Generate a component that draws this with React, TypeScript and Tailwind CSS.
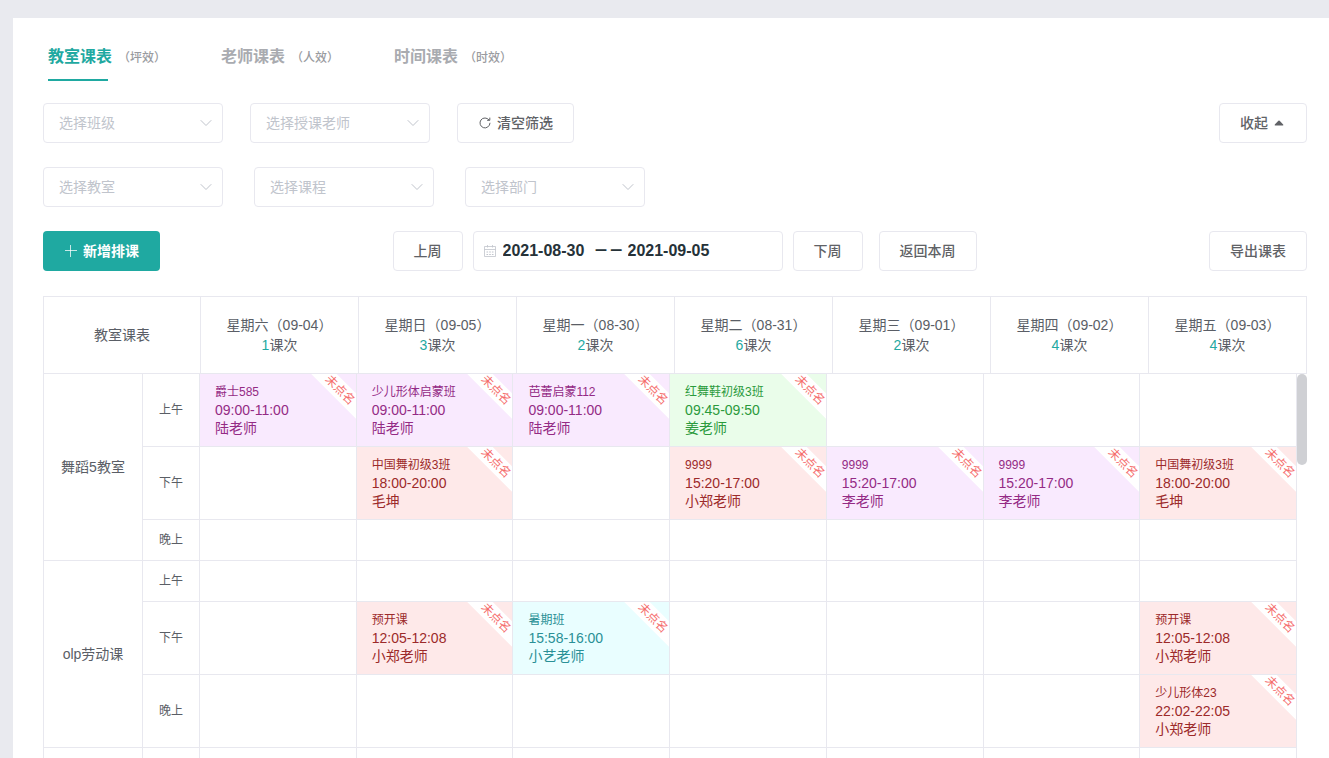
import React from 'react';
import clsx from 'clsx';

type Tone = 'purple' | 'red' | 'green' | 'cyan';

interface Lesson {
  title: string;
  time: string;
  teacher: string;
  tone: Tone;
}

interface Slot {
  period: string;
  lessons: Record<number, Lesson>;
}

interface Room {
  name: string;
  slots: Slot[];
}

const TONES: Record<Tone, string> = {
  purple: 'bg-[#f9eafe] text-[#942a85]',
  red: 'bg-[#fee9e9] text-[#9c2a2a]',
  green: 'bg-[#eafdea] text-[#2a9a3c]',
  cyan: 'bg-[#e9feff] text-[#2a9096]',
};

const TABS = [
  { label: '教室课表', hint: '（坪效）' },
  { label: '老师课表', hint: '（人效）' },
  { label: '时间课表', hint: '（时效）' },
];

const DAYS = [
  { name: '星期六（09-04）', count: 1 },
  { name: '星期日（09-05）', count: 3 },
  { name: '星期一（08-30）', count: 2 },
  { name: '星期二（08-31）', count: 6 },
  { name: '星期三（09-01）', count: 2 },
  { name: '星期四（09-02）', count: 4 },
  { name: '星期五（09-03）', count: 4 },
];

const ROOMS: Room[] = [
  {
    name: '舞蹈5教室',
    slots: [
      {
        period: '上午',
        lessons: {
          0: { title: '爵士585', time: '09:00-11:00', teacher: '陆老师', tone: 'purple' },
          1: { title: '少儿形体启蒙班', time: '09:00-11:00', teacher: '陆老师', tone: 'purple' },
          2: { title: '芭蕾启蒙112', time: '09:00-11:00', teacher: '陆老师', tone: 'purple' },
          3: { title: '红舞鞋初级3班', time: '09:45-09:50', teacher: '姜老师', tone: 'green' },
        },
      },
      {
        period: '下午',
        lessons: {
          1: { title: '中国舞初级3班', time: '18:00-20:00', teacher: '毛坤', tone: 'red' },
          3: { title: '9999', time: '15:20-17:00', teacher: '小郑老师', tone: 'red' },
          4: { title: '9999', time: '15:20-17:00', teacher: '李老师', tone: 'purple' },
          5: { title: '9999', time: '15:20-17:00', teacher: '李老师', tone: 'purple' },
          6: { title: '中国舞初级3班', time: '18:00-20:00', teacher: '毛坤', tone: 'red' },
        },
      },
      { period: '晚上', lessons: {} },
    ],
  },
  {
    name: 'olp劳动课',
    slots: [
      { period: '上午', lessons: {} },
      {
        period: '下午',
        lessons: {
          1: { title: '预开课', time: '12:05-12:08', teacher: '小郑老师', tone: 'red' },
          2: { title: '暑期班', time: '15:58-16:00', teacher: '小艺老师', tone: 'cyan' },
          6: { title: '预开课', time: '12:05-12:08', teacher: '小郑老师', tone: 'red' },
        },
      },
      {
        period: '晚上',
        lessons: {
          6: { title: '少儿形体23', time: '22:02-22:05', teacher: '小郑老师', tone: 'red' },
        },
      },
    ],
  },
  { name: '', slots: [{ period: '', lessons: {} }] },
];

const RefreshIcon = () => (
  <svg viewBox="0 0 14 14" className="h-3.5 w-3.5" fill="none" stroke="currentColor" strokeWidth="1" strokeLinecap="round" strokeLinejoin="round" aria-hidden="true">
    <path d="M12 7.2A5 5 0 1 1 11 3.9" />
    <path d="M11.8 2v2.3H9.5" />
  </svg>
);

const PlusIcon = () => (
  <svg viewBox="0 0 14 14" className="h-3.5 w-3.5" fill="none" stroke="currentColor" strokeWidth="1" aria-hidden="true">
    <path d="M1 6.5h12M6.5 1v12" strokeOpacity="0.75" />
  </svg>
);

const CaretTopIcon = () => (
  <svg viewBox="0 0 14 14" className="h-3.5 w-3.5" fill="currentColor" aria-hidden="true">
    <path d="M2.8 8.6 6.4 4.7q.6-.6 1.2 0l3.6 3.9q.5.9-.4.9H3.2q-.9 0-.4-.9Z" />
  </svg>
);

const ChevronDownIcon = () => (
  <svg viewBox="0 0 14 14" className="pointer-events-none absolute top-[13px] right-2.5 h-3.5 w-3.5 text-[#c0c4cc]" fill="none" stroke="currentColor" strokeWidth="1" strokeLinecap="round" strokeLinejoin="round" aria-hidden="true">
    <path d="M2 4.5l5 5 5-5" />
  </svg>
);

const CalendarIcon = () => (
  <svg viewBox="0 0 14 14" className="h-3.5 w-3.5 shrink-0 text-[#c0c4cc]" fill="none" stroke="currentColor" strokeWidth="1" aria-hidden="true">
    <path d="M1.5 2.5h11v10h-11zM1.5 5.5h11M4.5 1v2.5M9.5 1v2.5" strokeOpacity="0.8" />
    <path d="M3.5 8h1.6M6.2 8h1.6M8.9 8h1.6M3.5 10.5h1.6M6.2 10.5h1.6M8.9 10.5h1.6" />
  </svg>
);

interface FilterSelectProps {
  placeholder: string;
}

const FilterSelect: React.FC<FilterSelectProps> = ({ placeholder }) => (
  <div className="relative w-[180px]">
    <select
      aria-label={placeholder}
      defaultValue=""
      className="block h-10 w-full appearance-none rounded border border-[#e8e8ef] bg-white pr-8 pl-[15px] text-sm text-[#c0c4cc] outline-none"
    >
      <option value="">{placeholder}</option>
    </select>
    <ChevronDownIcon />
  </div>
);

interface PlainButtonProps {
  children: React.ReactNode;
}

const PlainButton: React.FC<PlainButtonProps> = ({ children }) => (
  <button
    type="button"
    className="flex h-10 shrink-0 items-center rounded border border-[#e8e8ef] bg-white px-5 text-sm font-medium text-[#606266] hover:border-[#1fa9a1] hover:text-[#1fa9a1]"
  >
    {children}
  </button>
);

const LessonCard: React.FC<{ lesson: Lesson }> = ({ lesson }) => (
  <div className={clsx('relative h-[72px] overflow-hidden px-[15px] py-[9px] text-left text-sm leading-[18px]', TONES[lesson.tone])}>
    <p className="text-xs leading-[18px]">{lesson.title}</p>
    <p>{lesson.time}</p>
    <p>{lesson.teacher}</p>
    <span className="absolute top-[7px] -right-6 w-20 rotate-45 bg-white text-center text-xs leading-[18px] text-[#f56c6c]">
      未点名
    </span>
  </div>
);

const RoomRows: React.FC<{ room: Room }> = ({ room }) => (
  <>
    {room.slots.map((slot, i) => (
      <tr key={i}>
        {i === 0 && (
          <th scope="rowgroup" rowSpan={room.slots.length} className="border-r border-b border-[#e8e8ef] text-sm font-normal">
            {room.name}
          </th>
        )}
        <th scope="row" className="h-[41px] border-r border-b border-[#e8e8ef] text-xs font-normal">
          {slot.period}
        </th>
        {DAYS.map((day, d) => (
          <td key={day.name} className="border-r border-b border-[#e8e8ef] p-0">
            {slot.lessons[d] && <LessonCard lesson={slot.lessons[d]} />}
          </td>
        ))}
      </tr>
    ))}
  </>
);

const App: React.FC = () => {
  return (
    <div className="h-screen overflow-hidden bg-[#e9eaef] pt-[18px] pl-[13px] font-['Liberation_Sans','Noto_Sans_CJK_SC',sans-serif] text-[#5a5e66]">
      <main className="flex h-full flex-col bg-white pt-[27px] pr-[22px] pl-[30px]">
        {/* Tabs */}
        <nav className="mb-[22px] flex gap-[55px] pl-[5px]">
          {TABS.map((tab, i) => (
            <button
              key={tab.label}
              type="button"
              className={clsx(
                'relative flex h-9 items-start gap-1.5 text-base leading-6 font-bold',
                i === 0 ? 'text-[#1fa9a1]' : 'text-[#a9abb0]'
              )}
            >
              {tab.label}
              <span className="text-xs leading-[26px] font-medium text-[#999ba0]">{tab.hint}</span>
              {i === 0 && <span className="absolute bottom-0 left-0 h-0.5 w-[60px] bg-[#1fa9a1]" />}
            </button>
          ))}
        </nav>

        {/* Filters */}
        <div className="mb-6 flex items-center justify-between">
          <div className="flex gap-[27px]">
            <FilterSelect placeholder="选择班级" />
            <FilterSelect placeholder="选择授课老师" />
            <PlainButton>
              <RefreshIcon />
              <span className="ml-[5px]">清空筛选</span>
            </PlainButton>
          </div>
          <PlainButton>
            <span className="mr-1">收起</span>
            <CaretTopIcon />
          </PlainButton>
        </div>
        <div className="mb-6 flex gap-[31px]">
          <FilterSelect placeholder="选择教室" />
          <FilterSelect placeholder="选择课程" />
          <FilterSelect placeholder="选择部门" />
        </div>

        {/* Week switcher */}
        <div className="mb-[25px] flex items-center justify-between">
          <button type="button" className="flex h-10 items-center gap-[5px] rounded bg-[#1fa9a1] px-[21px] text-sm font-bold text-white">
            <PlusIcon />
            新增排课
          </button>
          <div className="flex items-center gap-2.5">
            <PlainButton>上周</PlainButton>
            <div className="flex h-10 w-[310px] items-center rounded border border-[#e8e8ef] px-[9px] text-base font-bold text-[#263238]">
              <CalendarIcon />
              <input aria-label="开始日期" defaultValue="2021-08-30" className="ml-1.5 w-[87px] outline-none" />
              <span className="flex w-[38px] justify-center gap-[3px] font-['Roboto',sans-serif]">
                <span>—</span>
                <span>—</span>
              </span>
              <input aria-label="结束日期" defaultValue="2021-09-05" className="w-[87px] outline-none" />
            </div>
            <PlainButton>下周</PlainButton>
            <div className="ml-1.5">
              <PlainButton>返回本周</PlainButton>
            </div>
          </div>
          <PlainButton>导出课表</PlainButton>
        </div>

        {/* Timetable */}
        <table className="w-full table-fixed border-separate border-spacing-0 border-t border-l border-[#e8e8ef] text-sm">
          <colgroup>
            <col className="w-[157px]" />
            {DAYS.map(day => (
              <col key={day.name} />
            ))}
          </colgroup>
          <thead>
            <tr>
              <th scope="col" className="h-[77px] border-r border-b border-[#e8e8ef] font-normal">教室课表</th>
              {DAYS.map(day => (
                <th key={day.name} scope="col" className="border-r border-b border-[#e8e8ef] p-0 leading-5 font-normal whitespace-nowrap">
                  <div>{day.name}</div>
                  <div>
                    <span className="text-[#1fa9a1]">{day.count}</span>课次
                  </div>
                </th>
              ))}
            </tr>
          </thead>
        </table>
        <div className="flex min-h-0 flex-1 overflow-hidden">
          <div className="flex-1">
            <table className="w-full table-fixed border-separate border-spacing-0 border-l border-[#e8e8ef]">
              <colgroup>
                <col className="w-[99px]" />
                <col className="w-[57px]" />
                {DAYS.map(day => (
                  <col key={day.name} />
                ))}
              </colgroup>
              <tbody>
                {ROOMS.map((room, i) => (
                  <RoomRows key={i} room={room} />
                ))}
              </tbody>
            </table>
          </div>
          <div className="w-2.5">
            <div className="h-[91px] rounded-full bg-[#cfd0d4]" />
          </div>
        </div>
      </main>
    </div>
  );
};

export default App;
